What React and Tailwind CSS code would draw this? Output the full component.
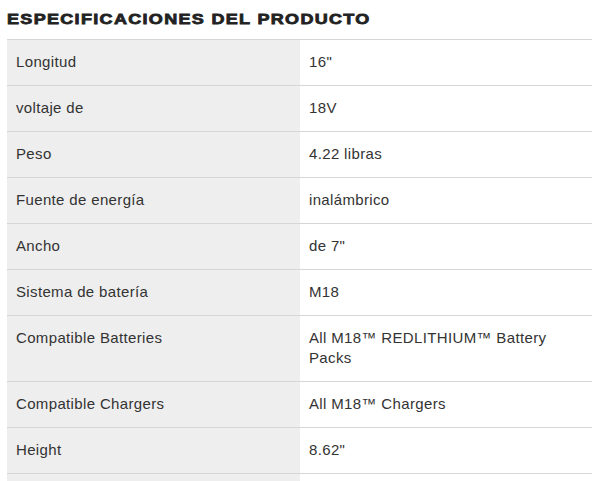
export default function App() {
  const rows = [
    ["Longitud", "16\""],
    ["voltaje de", "18V"],
    ["Peso", "4.22 libras"],
    ["Fuente de energía", "inalámbrico"],
    ["Ancho", "de 7\""],
    ["Sistema de batería", "M18"],
    ["Compatible Batteries", "All M18™ REDLITHIUM™ Battery Packs"],
    ["Compatible Chargers", "All M18™ Chargers"],
    ["Height", "8.62\""],
    ["", ""],
  ];
  return (
    <div className="w-[597px] h-[481px] overflow-hidden bg-white" style={{ fontFamily: '"Liberation Sans", Arial, sans-serif' }}>
      <div className="h-[39px] pl-[7px] pt-[7px]">
        <h2 className="inline-block origin-left scale-x-[1.2] text-[15px] leading-[15px] font-bold tracking-[1.1px] text-[#222] uppercase [-webkit-text-stroke:0.8px_#222]">
          Especificaciones del producto
        </h2>
      </div>
      <div className="ml-[7px] w-[585px] border-t border-[#d6d6d6]">
        {rows.map(([k, v], i) => (
          <div key={i} className="grid grid-cols-[293px_292px] border-b border-[#d6d6d6] text-[15px] leading-[20px] tracking-[0.35px] text-[#333]">
            <div className="bg-[#eeeeee] pl-[9px] pr-[9px] pt-[12px] pb-[13px] min-h-[45px]">{k}</div>
            <div className="pl-[9px] pr-[30px] pt-[12px] pb-[13px]">{v}</div>
          </div>
        ))}
      </div>
    </div>
  );
}
